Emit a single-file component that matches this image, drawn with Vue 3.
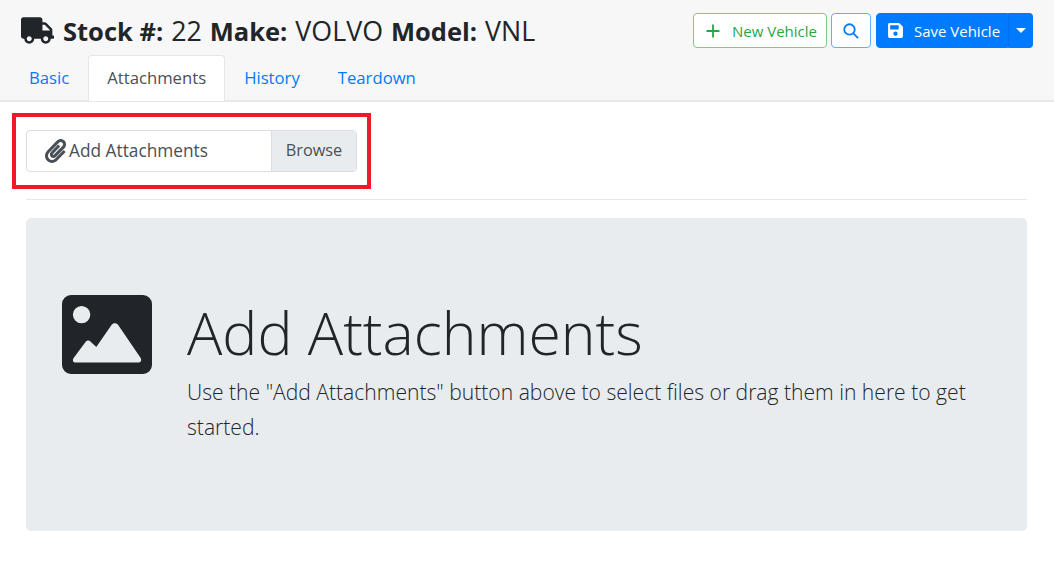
<script setup>
const tabs = ['Basic', 'Attachments', 'History', 'Teardown']
</script>

<template>
  <div class="page">
    <header class="head">
      <div class="top">
        <h3 class="title">
          <svg class="truck" viewBox="0 0 640 512"><path d="M624 352h-16V243.9c0-12.7-5.1-24.9-14.1-33.9L494 110.1c-9-9-21.2-14.1-33.9-14.1H416V48c0-26.5-21.5-48-48-48H48C21.5 0 0 21.5 0 48v320c0 26.5 21.5 48 48 48h16c0 53 43 96 96 96s96-43 96-96h128c0 53 43 96 96 96s96-43 96-96h48c8.8 0 16-7.2 16-16v-32c0-8.8-7.2-16-16-16zM160 464c-26.5 0-48-21.5-48-48s21.5-48 48-48 48 21.5 48 48-21.5 48-48 48zm320 0c-26.5 0-48-21.5-48-48s21.5-48 48-48 48 21.5 48 48-21.5 48-48 48zm80-208H416V144h44.1l99.9 99.9V256z"/></svg>
          <span><b>Stock #:</b> 22 <b>Make:</b> VOLVO <b>Model:</b> VNL</span>
        </h3>
        <div class="actions">
          <button class="btn new">
            <svg class="plus" viewBox="0 0 14 14"><path d="M7 0.5v13M0.5 7h13"/></svg>
            New Vehicle
          </button>
          <button class="btn find" aria-label="Search">
            <svg class="glass" viewBox="0 0 18 18"><circle cx="7.3" cy="7.3" r="5.9"/><path d="M11.6 11.6l5.4 5.4"/></svg>
          </button>
          <div class="split">
            <button class="btn save">
              <svg class="disk" viewBox="0 0 448 512"><path d="M433.941 129.941l-83.882-83.882A48 48 0 0 0 316.118 32H48C21.49 32 0 53.49 0 80v352c0 26.51 21.49 48 48 48h352c26.51 0 48-21.49 48-48V163.882a48 48 0 0 0-14.059-33.941zM224 416c-35.346 0-64-28.654-64-64 0-35.346 28.654-64 64-64s64 28.654 64 64c0 35.346-28.654 64-64 64zm96-304.52V212c0 6.627-5.373 12-12 12H76c-6.627 0-12-5.373-12-12V108c0-6.627 5.373-12 12-12h228.52c3.183 0 6.235 1.264 8.485 3.515l3.48 3.48A11.996 11.996 0 0 1 320 111.48z"/></svg>
              Save Vehicle
            </button>
            <button class="btn caret" aria-label="More"><i></i></button>
          </div>
        </div>
      </div>
      <nav class="tabs">
        <a v-for="t in tabs" :key="t" class="tab" :class="{ active: t === 'Attachments' }">{{ t }}</a>
      </nav>
    </header>

    <main class="body">
      <div class="upload">
        <div class="field">
          <svg class="clip" viewBox="0 0 448 512"><path d="M43.246 466.142c-58.43-60.289-57.341-157.511 1.386-217.581L254.392 34c44.316-45.332 116.351-45.336 160.671 0 43.89 44.894 43.943 117.329 0 162.276L232.214 383.128c-29.855 30.537-78.633 30.111-107.982-.998-28.275-29.97-27.368-77.473 1.452-106.953l143.743-146.835c6.182-6.314 16.312-6.422 22.626-.241l22.861 22.379c6.315 6.182 6.422 16.312.241 22.626L171.427 319.927c-4.932 5.045-5.236 13.428-.648 18.292 4.372 4.634 11.245 4.711 15.688.165l182.849-186.851c19.613-20.062 19.613-52.725-.011-72.798-19.189-19.627-49.957-19.637-69.154 0L90.39 293.295c-34.763 35.56-35.299 93.12-1.191 128.313 34.01 35.093 88.985 35.137 123.058.286l172.06-175.999c6.177-6.319 16.307-6.433 22.626-.256l22.877 22.364c6.319 6.177 6.434 16.307.256 22.626l-172.06 175.998c-59.576 60.938-155.943 60.216-214.77-.485z"/></svg>
          <span>Add Attachments</span>
        </div>
        <div class="browse">Browse</div>
        <div class="mark"></div>
      </div>
      <hr class="rule" />
      <section class="jumbo">
        <svg class="picture" viewBox="0 0 90 79">
          <path fill-rule="evenodd" d="M9 0h72a9 9 0 0 1 9 9v61a9 9 0 0 1-9 9H9a9 9 0 0 1-9-9V9a9 9 0 0 1 9-9zM19.600 28.300a8.700 8.700 0 1 0 0-17.400 8.700 8.700 0 0 0 0 17.400zM12 62.500 23.500 47c1.400-2 4-2 5.400 0L34.300 52 49.500 30c1.700-2.500 5-2.500 6.700 0L78 62c2.500 3.700.8 5.600-2.500 5.600H14c-3 0-4.200-2.400-2-5.100z"/>
        </svg>
        <div class="copy">
          <h1 class="heading">Add Attachments</h1>
          <p class="lead">Use the "Add Attachments" button above to select files or drag them in here to get started.</p>
        </div>
      </section>
    </main>
  </div>
</template>

<style scoped>
.page {
  width: 1054px;
  height: 566px;
  overflow: hidden;
  background: #fff;
  color: #212529;
  font-family: "Open Sans", "Noto Sans", sans-serif;
}
.head {
  height: 102px;
  box-sizing: border-box;
  background: #f7f7f7;
  border-bottom: 2px solid #e8e8e8;
  display: flex;
  flex-direction: column;
  padding: 13px 21px 0;
}
.top {
  display: flex;
  justify-content: space-between;
  flex: none;
  height: 42px;
}
.title {
  margin: 0;
  height: 35px;
  display: flex;
  align-items: center;
  gap: 9px;
  font-size: 26.8px;
  font-weight: 400;
  word-spacing: 1px;
  white-space: nowrap;
}
.title b { font-size: 25.5px; font-weight: 700; word-spacing: 0; }
.truck { width: 33px; height: 27px; fill: #212529; }
.actions { display: flex; gap: 4px; }
.btn {
  height: 35px;
  box-sizing: border-box;
  font: inherit;
  font-size: 15px;
  border-radius: 4px;
  display: flex;
  align-items: center;
  justify-content: center;
  padding: 0;
  white-space: nowrap;
}
.new {
  width: 134px;
  padding-left: 3px;
  background: #fff;
  border: 1px solid #7fc98f;
  color: #28a745;
  gap: 12px;
}
.plus { width: 14px; height: 14px; fill: none; stroke: #28a745; stroke-width: 1.8; }
.find {
  width: 40px;
  background: #fff;
  border: 1px solid #66aaff;
}
.glass { width: 16px; height: 16px; fill: none; stroke: #007bff; stroke-width: 2; }
.split { display: flex; margin-left: 1px; }
.save {
  width: 132px;
  padding-left: 4px;
  background: #007bff;
  border: 1px solid #007bff;
  border-radius: 4px 0 0 4px;
  color: #fff;
  gap: 11px;
}
.disk { width: 15px; height: 17px; fill: #fff; }
.caret {
  width: 25px;
  background: #007bff;
  border: 1px solid #007bff;
  border-left-color: #0072ed;
  border-radius: 0 4px 4px 0;
}
.caret i {
  display: block;
  border-top: 5px solid #fff;
  border-left: 5px solid transparent;
  border-right: 5px solid transparent;
}
.tabs { display: flex; flex: none; margin-left: -11px; height: 45px; }
.tab {
  box-sizing: border-box;
  height: 46px;
  padding: 0 18px 2px;
  display: flex;
  align-items: center;
  font-size: 16.7px;
  color: #007bff;
  border: 1px solid transparent;
  border-bottom: 0;
  border-radius: 4px 4px 0 0;
}
.tab.active {
  position: relative;
  background: #fff;
  border-color: #e6e6e6;
  color: #495057;
}
.body { padding: 28px 27px 0 26px; }
.upload {
  position: relative;
  display: flex;
  width: 331px;
  height: 42px;
  box-sizing: border-box;
  border: 1px solid #d8dee4;
  border-radius: 4px;
  font-size: 17.3px;
  color: #495057;
}
.field {
  flex: 1;
  display: flex;
  align-items: center;
  gap: 3px;
  padding: 0 0 2px 18px;
}
.clip { width: 21px; height: 24px; fill: #495057; margin-top: 2px; }
.browse {
  width: 85px;
  box-sizing: border-box;
  display: flex;
  align-items: center;
  justify-content: center;
  padding-bottom: 2px;
  font-size: 16.3px;
  background: #e9ecef;
  border-left: 1px solid #d8dee4;
  border-radius: 0 4px 4px 0;
}
.mark {
  position: absolute;
  left: -15px;
  top: -18px;
  width: 359px;
  height: 76px;
  box-sizing: border-box;
  border: 4px solid #ed1c24;
  pointer-events: none;
}
.rule {
  margin: 27px 0 18px;
  border: 0;
  border-top: 1px solid #e6e8ea;
}
.jumbo {
  height: 313px;
  box-sizing: border-box;
  background: #e9ecef;
  border-radius: 5px;
  display: flex;
  align-items: flex-start;
  padding: 77px 36px 0;
  gap: 35px;
}
.picture { flex: none; width: 90px; height: 79px; fill: #212529; }
.copy { flex: 1; }
.heading {
  margin: 0;
  font-size: 58.9px;
  font-weight: 300;
  line-height: 74px;
  white-space: nowrap;
}
.lead {
  margin: 5px 0 0;
  font-size: 21.1px;
  font-weight: 300;
  line-height: 35px;
}
</style>
